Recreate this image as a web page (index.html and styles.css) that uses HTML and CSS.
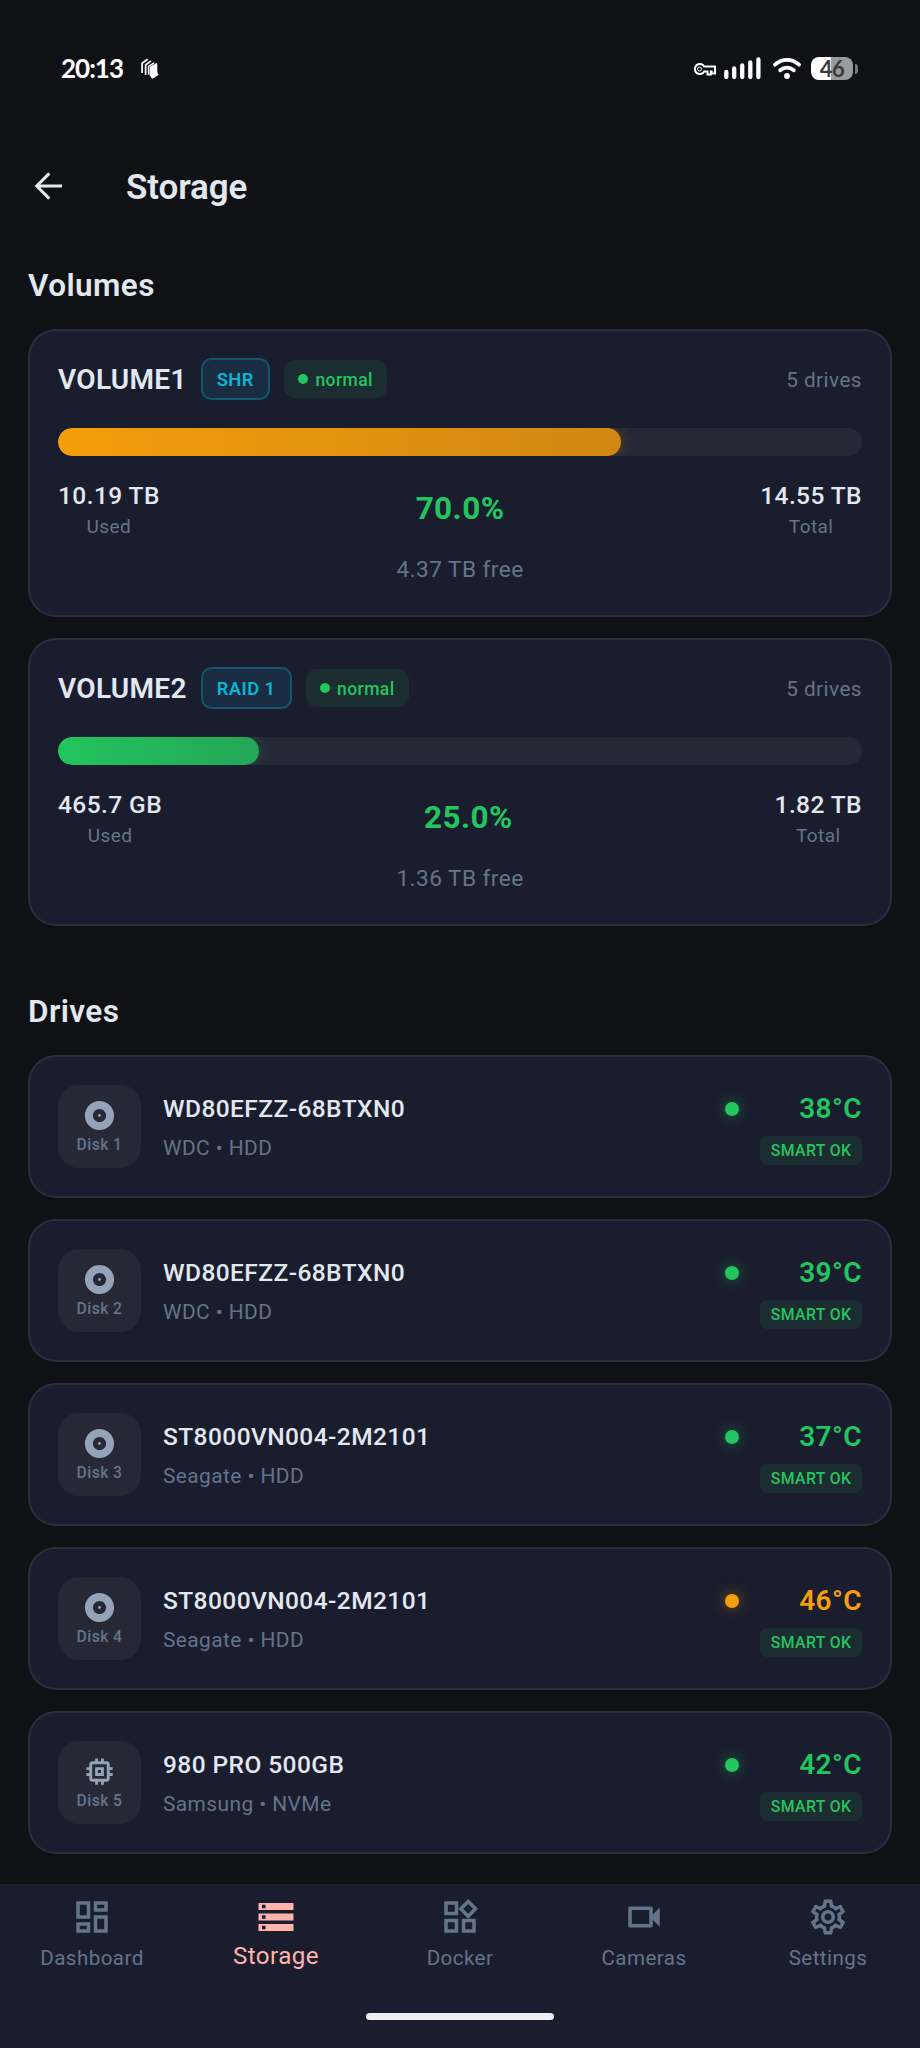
FILE: index.html
```html
<!DOCTYPE html>
<html lang="en">
<head>
    <meta charset="UTF-8">
    <meta name="viewport" content="width=device-width, initial-scale=1.0">
    <title>Storage</title>
    <link rel="stylesheet" href="styles.css">
</head>
<body>
    <!-- Icon shapes used more than once -->
    <svg class="sprite" width="0" height="0">
        <symbol id="disc" viewBox="0 0 24 24">
            <path d="M12 2C6.48 2 2 6.48 2 12s4.48 10 10 10 10-4.48 10-10S17.52 2 12 2zm0 14.5c-2.49 0-4.5-2.01-4.5-4.5S9.51 7.5 12 7.5s4.5 2.01 4.5 4.5-2.01 4.5-4.5 4.5zm0-5.5c-.55 0-1 .45-1 1s.45 1 1 1 1-.45 1-1-.45-1-1-1z"/>
        </symbol>
        <symbol id="chip" viewBox="0 0 24 24">
            <path d="M15 9H9v6h6V9zm-2 4h-2v-2h2v2zm8-2V9h-2V7c0-1.1-.9-2-2-2h-2V3h-2v2h-2V3H9v2H7c-1.1 0-2 .9-2 2v2H3v2h2v2H3v2h2v2c0 1.1.9 2 2 2h2v2h2v-2h2v2h2v-2h2c1.1 0 2-.9 2-2v-2h2v-2h-2v-2h2zm-4 6H7V7h10v10z"/>
        </symbol>
    </svg>

    <!-- Status bar -->
    <div class="status-bar">
        <span class="clock">20:13</span>
        <svg class="notif" width="18" height="21" viewBox="0 0 18 21">
            <path d="M1.1 15V5.2L6.6 1.2M4.6 17V7L10 2.8" fill="none" stroke="#fff" stroke-width="1.7"/>
            <path d="M7.6 16.5V8.4l5.600-3.600" fill="none" stroke="#fff" stroke-width="1.6"/>
            <path d="M9 8.8l6.200-3.600c.6-.3 1 0 1 .6l.2 8.800 1.300 2.200-5.200 3.400c-.8.5-1.600.4-2-.3L8.600 17z" fill="#fff"/>
        </svg>
        <div class="status-icons">
            <svg class="key" width="24" height="14" viewBox="0 0 24 14">
                <path d="M11.2 4.600A5 5 0 1 0 11.2 9.400H14.5V12.500H17.8V9.400H18.7V11.500H22V4.600Z" fill="none" stroke="#fff" stroke-width="2"/>
                <circle cx="6.5" cy="7" r="2" fill="none" stroke="#fff" stroke-width="1"/>
            </svg>
            <svg class="signal" width="38" height="23" viewBox="0 0 38 23">
                <path d="M2.3 15v5M10.2 11.5v8.500M18.2 8.500v11.500M26.3 5.500v14.500M34.4 2.500v17.500" stroke="#fff" stroke-width="4.3" stroke-linecap="round"/>
            </svg>
            <svg class="wifi" width="30" height="23" viewBox="0 0 30 23">
                <path d="M3 7.600C10 1.300 20 1.300 27 7.600M8.200 13.300C12.300 9.900 17.700 9.900 21.800 13.300" fill="none" stroke="#fff" stroke-width="3.9" stroke-linecap="round"/>
                <circle cx="15" cy="19" r="2.9" fill="#fff"/>
            </svg>
            <div class="battery"><span>46</span></div>
            <div class="battery-tip"></div>
        </div>
    </div>

    <!-- App bar -->
    <header>
        <svg width="30" height="30" viewBox="0 0 30 30">
            <path d="M28 15H3M15.300 2.400L2.700 15l12.600 12.600" fill="none" stroke="#e2e8f0" stroke-width="3"/>
        </svg>
        <h1>Storage</h1>
    </header>

    <main>
        <h2>Volumes</h2>

        <section class="card volume">
            <div class="volume-head">
                <span class="volume-name">VOLUME1</span>
                <span class="raid">SHR</span>
                <span class="state">normal</span>
                <span class="count">5 drives</span>
            </div>
            <div class="bar"><div class="fill orange" style="width: 70%"></div></div>
            <div class="stats">
                <div class="stat"><b>10.19 TB</b><span>Used</span></div>
                <div class="percent">70.0%</div>
                <div class="stat"><b>14.55 TB</b><span>Total</span></div>
            </div>
            <div class="free">4.37 TB free</div>
        </section>

        <section class="card volume">
            <div class="volume-head">
                <span class="volume-name">VOLUME2</span>
                <span class="raid">RAID 1</span>
                <span class="state">normal</span>
                <span class="count">5 drives</span>
            </div>
            <div class="bar"><div class="fill green" style="width: 25%"></div></div>
            <div class="stats">
                <div class="stat"><b>465.7 GB</b><span>Used</span></div>
                <div class="percent">25.0%</div>
                <div class="stat"><b>1.82 TB</b><span>Total</span></div>
            </div>
            <div class="free">1.36 TB free</div>
        </section>

        <h2 class="drives-title">Drives</h2>

        <section class="card drive">
            <div class="slot"><svg><use href="#disc"/></svg><span>Disk 1</span></div>
            <div class="info">
                <div class="model"><span>WD80EFZZ-68BTXN0</span><i class="dot"></i></div>
                <div class="vendor">WDC • HDD</div>
            </div>
            <div class="health"><div class="temp">38°C</div><div class="smart">SMART OK</div></div>
        </section>

        <section class="card drive">
            <div class="slot"><svg><use href="#disc"/></svg><span>Disk 2</span></div>
            <div class="info">
                <div class="model"><span>WD80EFZZ-68BTXN0</span><i class="dot"></i></div>
                <div class="vendor">WDC • HDD</div>
            </div>
            <div class="health"><div class="temp">39°C</div><div class="smart">SMART OK</div></div>
        </section>

        <section class="card drive">
            <div class="slot"><svg><use href="#disc"/></svg><span>Disk 3</span></div>
            <div class="info">
                <div class="model"><span>ST8000VN004-2M2101</span><i class="dot"></i></div>
                <div class="vendor">Seagate • HDD</div>
            </div>
            <div class="health"><div class="temp">37°C</div><div class="smart">SMART OK</div></div>
        </section>

        <section class="card drive warm">
            <div class="slot"><svg><use href="#disc"/></svg><span>Disk 4</span></div>
            <div class="info">
                <div class="model"><span>ST8000VN004-2M2101</span><i class="dot"></i></div>
                <div class="vendor">Seagate • HDD</div>
            </div>
            <div class="health"><div class="temp">46°C</div><div class="smart">SMART OK</div></div>
        </section>

        <section class="card drive">
            <div class="slot"><svg><use href="#chip"/></svg><span>Disk 5</span></div>
            <div class="info">
                <div class="model"><span>980 PRO 500GB</span><i class="dot"></i></div>
                <div class="vendor">Samsung • NVMe</div>
            </div>
            <div class="health"><div class="temp">42°C</div><div class="smart">SMART OK</div></div>
        </section>
    </main>

    <!-- Bottom navigation -->
    <footer>
        <nav>
            <a>
                <svg viewBox="0 0 24 24"><path d="M19 5v2h-4V5h4M9 5v6H5V5h4m10 8v6h-4v-6h4M9 17v2H5v-2h4M21 3h-8v6h8V3zM11 3H3v10h8V3zm10 8h-8v10h8V11zm-10 4H3v6h8v-6z"/></svg>
                <span>Dashboard</span>
            </a>
            <a class="active">
                <svg viewBox="0 0 24 24"><path d="M2 20h20v-4H2v4zm2-3h2v2H4v-2zM2 4v4h20V4H2zm4 3H4V5h2v2zm-4 7h20v-4H2v4zm2-3h2v2H4v-2z"/></svg>
                <span>Storage</span>
            </a>
            <a>
                <svg viewBox="0 0 24 24"><path d="M16.660 4.520l2.830 2.830-2.830 2.830-2.830-2.830 2.830-2.830M9 5v4H5V5h4m10 10v4h-4v-4h4M9 15v4H5v-4h4m7.660-13.310L11 7.340 16.660 13l5.660-5.660-5.660-5.650zM11 3H3v8h8V3zm10 10h-8v8h8v-8zm-10 0H3v8h8v-8z"/></svg>
                <span>Docker</span>
            </a>
            <a>
                <svg viewBox="0 0 24 24"><path d="M15 8v8H5V8h10m1-2H4c-.55 0-1 .45-1 1v10c0 .55.45 1 1 1h12c.55 0 1-.45 1-1v-3.500l4 4v-11l-4 4V7c0-.55-.45-1-1-1z"/></svg>
                <span>Cameras</span>
            </a>
            <a>
                <svg viewBox="0 0 24 24"><path d="M12,8A4,4 0 0,1 16,12A4,4 0 0,1 12,16A4,4 0 0,1 8,12A4,4 0 0,1 12,8M12,10A2,2 0 0,0 10,12A2,2 0 0,0 12,14A2,2 0 0,0 14,12A2,2 0 0,0 12,10M10,22C9.750,22 9.540,21.820 9.500,21.580L9.130,18.930C8.500,18.680 7.960,18.340 7.440,17.940L4.950,18.950C4.730,19.030 4.460,18.950 4.340,18.730L2.340,15.270C2.210,15.050 2.270,14.780 2.460,14.630L4.570,12.970L4.500,12L4.570,11L2.460,9.370C2.270,9.220 2.210,8.950 2.340,8.730L4.340,5.270C4.460,5.050 4.730,4.960 4.950,5.050L7.440,6.050C7.960,5.660 8.500,5.320 9.130,5.070L9.500,2.420C9.540,2.180 9.750,2 10,2H14C14.250,2 14.460,2.180 14.500,2.420L14.870,5.070C15.500,5.320 16.040,5.660 16.560,6.050L19.050,5.050C19.270,4.960 19.540,5.050 19.660,5.270L21.660,8.730C21.790,8.950 21.730,9.220 21.540,9.370L19.430,11L19.500,12L19.430,13L21.540,14.630C21.730,14.780 21.790,15.050 21.660,15.270L19.660,18.730C19.540,18.950 19.270,19.040 19.050,18.950L16.560,17.950C16.040,18.340 15.500,18.680 14.870,18.930L14.500,21.580C14.460,21.820 14.250,22 14,22H10M11.250,4L10.880,6.610C9.680,6.860 8.620,7.500 7.850,8.390L5.440,7.350L4.690,8.650L6.800,10.200C6.400,11.370 6.400,12.640 6.800,13.800L4.680,15.360L5.430,16.660L7.860,15.620C8.630,16.500 9.680,17.140 10.870,17.380L11.240,20H12.760L13.130,17.390C14.320,17.140 15.370,16.500 16.140,15.620L18.570,16.660L19.320,15.360L17.200,13.810C17.600,12.640 17.600,11.370 17.200,10.200L19.310,8.650L18.560,7.350L16.150,8.390C15.380,7.500 14.320,6.860 13.120,6.620L12.750,4H11.250Z"/></svg>
                <span>Settings</span>
            </a>
        </nav>
        <div class="home-bar"></div>
    </footer>
</body>
</html>
```
FILE: styles.css
```css
* {
    box-sizing: border-box;
}

body {
    margin: 0;
    width: 920px;
    height: 2048px;
    display: flex;
    flex-direction: column;
    overflow: hidden;
    background-color: #0f1115;
    color: #e2e8f0;
    font-family: Roboto, "Noto Sans", sans-serif;
    letter-spacing: 0.42px;
    white-space: nowrap;
}

.sprite {
    display: none;
}

/* Status bar */
.status-bar {
    display: flex;
    align-items: center;
    height: 137px;
    padding: 0 61px;
}

.clock {
    padding-bottom: 2px;
    font-family: Lato, sans-serif;
    font-size: 26px;
    font-weight: 700;
    letter-spacing: -1px;
    color: #fff;
}

.notif {
    margin-left: 18px;
}

.status-icons {
    display: flex;
    align-items: center;
    margin-left: auto;
}

.key {
    margin-top: 1px;
}

.signal {
    margin: 0 10px 0 7px;
}

.wifi {
    margin-right: 9px;
}

.battery {
    width: 42px;
    height: 23px;
    border-radius: 8px;
    background: linear-gradient(90deg, #fff 20px, #999a9c 20px);
    color: #3b3b3d;
    font-family: Lato, sans-serif;
    font-size: 22px;
    font-weight: 700;
    line-height: 23px;
    letter-spacing: -0.5px;
    text-align: center;
}

.battery-tip {
    width: 3px;
    height: 10px;
    margin: 0 1px 0 2px;
    border-radius: 0 3px 3px 0;
    background-color: #77787b;
}

/* App bar */
header {
    display: flex;
    align-items: center;
    height: 98px;
    padding-left: 34px;
}

h1 {
    margin: 3px 0 0 62px;
    font-size: 35px;
    font-weight: 600;
    line-height: 42px;
    letter-spacing: -0.1px;
}

main {
    flex: 1;
    padding: 30px 28px 0;
}

h2 {
    margin: 0 0 23px;
    font-size: 31.5px;
    font-weight: 600;
    line-height: 41px;
}

.drives-title {
    margin-top: 65px;
}

.card {
    padding: 27px 28px;
    border: 2px solid rgba(255, 255, 255, 0.08);
    border-radius: 28px;
    background-color: #1a1d2d;
}

.card + .card {
    margin-top: 21px;
}

/* Volumes */
.volume {
    height: 288px;
}

.volume-head {
    display: flex;
    align-items: center;
    gap: 14px;
}

.volume-name {
    font-size: 28px;
    font-weight: 600;
    letter-spacing: 0.3px;
}

.raid {
    height: 42px;
    padding: 0 14px;
    border: 2px solid #11566b;
    border-radius: 10.5px;
    background-color: #192c41;
    color: #06b6d4;
    font-size: 18.4px;
    font-weight: 600;
    line-height: 40px;
}

.state {
    display: flex;
    align-items: center;
    gap: 7px;
    height: 38px;
    padding: 2px 14px 0;
    border-radius: 10.5px;
    background-color: #1c2d32;
    color: #22c55e;
    font-size: 17.5px;
    font-weight: 500;
}

.state::before {
    content: "";
    width: 10.5px;
    height: 10.5px;
    margin-top: -2px;
    border-radius: 50%;
    background-color: #22c55e;
}

.count {
    margin-left: auto;
    padding-top: 2px;
    color: #64748b;
    font-size: 20.8px;
}

.bar {
    height: 28px;
    margin-top: 28px;
    border-radius: 14px;
    background-color: #262836;
    overflow: hidden;
}

.fill {
    height: 100%;
    border-radius: 14px;
}

.orange {
    background: linear-gradient(90deg, #f59e0b, #d08713);
    box-shadow: 0 0 14px rgba(245, 158, 11, 0.3);
}

.green {
    background: linear-gradient(90deg, #22c55e, #24a656);
    box-shadow: 0 0 14px rgba(34, 197, 94, 0.3);
}

.stats {
    display: flex;
    justify-content: space-between;
    align-items: center;
    margin-top: 21.5px;
}

.stat {
    text-align: center;
}

.stat b {
    display: block;
    font-size: 24.5px;
    font-weight: 500;
    line-height: 36px;
}

.stat span {
    display: block;
    color: #64748b;
    font-size: 19px;
    line-height: 26px;
}

.percent {
    color: #22c55e;
    font-size: 31.5px;
    font-weight: 700;
}

.free {
    margin-top: 13.5px;
    color: #64748b;
    font-size: 22.7px;
    line-height: 34px;
    text-align: center;
}

/* Drives */
.drive {
    display: flex;
    align-items: center;
    height: 143px;
}

.slot {
    display: flex;
    flex-direction: column;
    align-items: center;
    width: 83px;
    height: 83px;
    padding-top: 12.5px;
    border-radius: 21px;
    background-color: #262836;
}

.slot svg {
    width: 35px;
    height: 35px;
    fill: #94a3b8;
}

.slot span {
    color: #64748b;
    font-size: 15.7px;
    font-weight: 500;
    line-height: 24px;
}

.info {
    flex: 1;
    margin: 0 21px 0 22px;
    padding-top: 2px;
}

.model {
    display: flex;
    justify-content: space-between;
    align-items: center;
    font-size: 24.5px;
    font-weight: 500;
    line-height: 42px;
}

.dot {
    width: 14px;
    height: 14px;
    margin-top: -1px;
    border-radius: 50%;
    background-color: #22c55e;
    box-shadow: 0 0 14px rgba(34, 197, 94, 0.5);
}

.vendor {
    color: #64748b;
    font-size: 20.9px;
    line-height: 37px;
}

.health {
    display: flex;
    flex-direction: column;
    align-items: flex-end;
}

.temp {
    color: #22c55e;
    font-size: 28px;
    font-weight: 600;
    line-height: 41px;
}

.smart {
    height: 29.5px;
    margin-top: 7px;
    padding: 0 10.5px;
    border-radius: 7px;
    background-color: #1c2d32;
    color: #22c55e;
    font-size: 15.8px;
    font-weight: 500;
    line-height: 30px;
}

.warm .temp {
    color: #f59e0b;
}

.warm .dot {
    background-color: #f59e0b;
    box-shadow: 0 0 14px rgba(245, 158, 11, 0.5);
}

/* Bottom navigation */
footer {
    height: 164px;
    background-color: #1a1d2d;
}

nav {
    display: flex;
    padding-top: 12px;
}

nav a {
    display: flex;
    flex: 1;
    flex-direction: column;
    align-items: center;
    color: #64748b;
    font-size: 20.6px;
    line-height: 41px;
}

nav svg {
    width: 42px;
    height: 42px;
    fill: currentColor;
}

nav .active {
    color: #ffb4ab;
    font-size: 24.2px;
    line-height: 36px;
}

.home-bar {
    width: 188px;
    height: 7px;
    margin: 34px auto 0;
    border-radius: 4px;
    background-color: #ededf2;
}
```
